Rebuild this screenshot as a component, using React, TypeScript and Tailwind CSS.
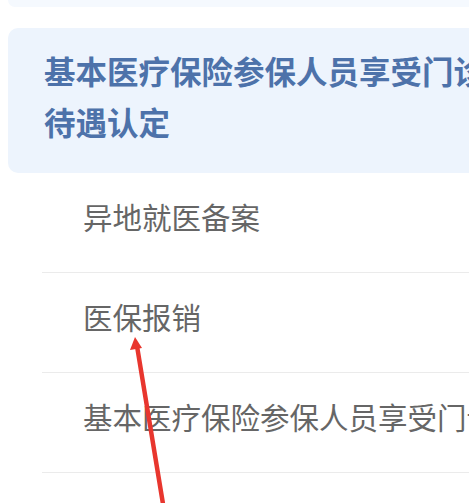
const rows = ['异地就医备案', '医保报销', '基本医疗保险参保人员享受门诊慢特病病种待遇认定', '门诊慢特病待遇认定'];

export default function App() {
    return (
        <div
            className="relative w-[469px] h-[503px] overflow-hidden bg-white"
            style={{ fontFamily: '"Noto Sans CJK SC", "Noto Sans", sans-serif' }}
        >
            <div className="w-[620px]">
                {/* end of previous card */}
                <div className="ml-[8px] h-[7px] rounded-b-[10px] bg-[#f5f9fe]" />

                {/* highlighted card */}
                <div className="ml-[8px] mt-[21px] rounded-[10px] bg-[#edf4fd] pl-[36px] pt-[17px] pb-[26px]">
                    <p className="text-[31.5px] leading-[51px] font-bold text-[#4d72aa] whitespace-nowrap">
                        基本医疗保险参保人员享受门诊慢特病病种
                        <br />
                        待遇认定
                    </p>
                </div>

                {/* list */}
                <div className="ml-[42px]">
                    {rows.map((r) => (
                        <div
                            key={r}
                            className="h-[100px] border-b border-[#ebebeb] pl-[41px] pb-[12px] flex items-center"
                        >
                            <span className="text-[29.5px] text-[#666666] whitespace-nowrap">{r}</span>
                        </div>
                    ))}
                </div>
            </div>

            {/* annotation arrow */}
            <svg className="absolute left-0 top-0 pointer-events-none" width="469" height="503" viewBox="0 0 469 503">
                <line x1="137" y1="346" x2="164" y2="510" stroke="#e8362e" strokeWidth="4.5" strokeLinecap="round" />
                <polygon points="135,337 130,350 142,348" fill="#e8362e" />
            </svg>
        </div>
    );
}
